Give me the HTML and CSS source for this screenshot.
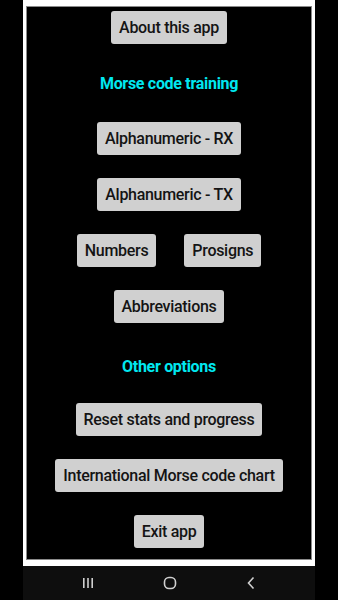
FILE: index.html
```html
<!DOCTYPE html>
<html>
<head>
<meta charset="utf-8">
<link rel="stylesheet" href="styles.css">
</head>
<body>
<div class="device">
  <div class="frame">
    <div class="screen">
      <button class="btn about">About this app</button>
      <div class="heading h1">Morse code training</div>
      <button class="btn">Alphanumeric - RX</button>
      <button class="btn">Alphanumeric - TX</button>
      <div class="pair">
        <button class="btn">Numbers</button>
        <button class="btn">Prosigns</button>
      </div>
      <button class="btn">Abbreviations</button>
      <div class="heading h2">Other options</div>
      <button class="btn reset">Reset stats and progress</button>
      <button class="btn">International Morse code chart</button>
      <button class="btn">Exit app</button>
    </div>
  </div>
  <div class="navbar">
    <svg class="nav-icon" width="12" height="12" viewBox="0 0 12 12">
      <rect x="1" y="1" width="1.6" height="10" fill="#cfcfcf"/>
      <rect x="5.2" y="1" width="1.6" height="10" fill="#cfcfcf"/>
      <rect x="9.4" y="1" width="1.6" height="10" fill="#cfcfcf"/>
    </svg>
    <svg class="nav-icon" width="14" height="14" viewBox="0 0 14 14">
      <rect x="1.5" y="1.5" width="11" height="11" rx="4.5" fill="none" stroke="#cfcfcf" stroke-width="1.6"/>
    </svg>
    <svg class="nav-icon" width="10" height="14" viewBox="0 0 10 14">
      <polyline points="7.5,1.5 2.5,7 7.5,12.5" fill="none" stroke="#cfcfcf" stroke-width="1.6"/>
    </svg>
  </div>
</div>
</body>
</html>
```
FILE: styles.css
```css
html, body {
  margin: 0;
  padding: 0;
  background: #000;
}
body {
  font-family: Roboto, "Liberation Sans", sans-serif;
}
.device {
  width: 292px;
  margin-left: 23px;
}
.frame {
  background: #fff;
  padding: 6px 3px 6px 3px;
}
.screen {
  height: 552px;
  background: #000;
  border: 1px solid #8a8a8a;
  display: flex;
  flex-direction: column;
  align-items: center;
}
.btn {
  font-family: Roboto, "Liberation Sans", sans-serif;
  font-weight: 500;
  font-size: 16px;
  letter-spacing: -0.3px;
  color: #141414;
  background: #d0d0d0;
  border: none;
  border-radius: 3px;
  height: 33px;
  padding: 0 8px;
  margin: 0 0 23px 0;
  line-height: 19px;
  flex: none;
}
.about {
  margin-top: 4px;
  margin-bottom: 30px;
}
.heading {
  color: #00e8f0;
  font-weight: 700;
  font-size: 16px;
  letter-spacing: -0.3px;
  line-height: 19px;
  height: 19px;
}
.h1 {
  margin-bottom: 29px;
}
.h2 {
  margin-top: 11px;
  margin-bottom: 27px;
}
.pair {
  display: flex;
  gap: 28px;
  margin-bottom: 23px;
}
.pair .btn {
  margin: 0;
}
.navbar {
  height: 34px;
  background: #0e0e0e;
  display: flex;
  align-items: center;
  justify-content: space-between;
  padding: 0 59px 0 59px;
}
```
